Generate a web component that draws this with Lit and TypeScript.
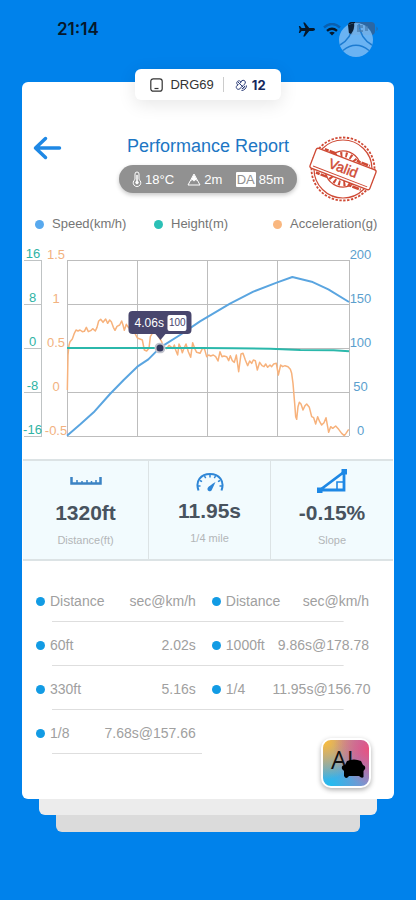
import { LitElement, html, svg, css } from "lit";
import { customElement } from "lit/decorators.js";

type Point = [number, number];

// Series samples on a 846 x 528 plotting canvas.
const speed: Point[] = [
  [0, 527], [40, 493], [80, 457], [129, 402], [170, 360], [211, 320], [244, 298], [279, 263],
  [339, 225], [399, 184], [489, 131], [559, 95], [631, 67], [676, 51], [734, 65], [784, 88], [846, 126],
];
const heightSeries: Point[] = [
  [0, 264], [400, 264], [500, 265], [610, 266], [700, 270], [800, 271], [846, 274],
];
const acceleration: Point[] = [
  [1, 390], [3, 285], [6, 255], [9, 245], [16, 237], [22, 220], [27, 210], [33, 213], [39, 210],
  [46, 215], [52, 214], [58, 202], [64, 215], [71, 212], [77, 206], [85, 213], [90, 202], [95, 183],
  [101, 178], [108, 187], [116, 177], [122, 190], [128, 180], [133, 185], [139, 202], [144, 211],
  [150, 199], [158, 195], [164, 183], [168, 195], [172, 211], [178, 193], [184, 202], [194, 210],
  [204, 220], [211, 234], [219, 237], [226, 240], [232, 270], [239, 273], [246, 265], [250, 230],
  [259, 215], [272, 225], [284, 245], [289, 260], [299, 266], [306, 256], [311, 260], [317, 265],
  [322, 255], [326, 270], [332, 285], [336, 252], [341, 262], [346, 278], [351, 265], [357, 252],
  [364, 275], [371, 292], [377, 248], [383, 265], [389, 277], [399, 280], [406, 266], [412, 265],
  [419, 290], [425, 285], [431, 288], [439, 285], [446, 290], [453, 303], [459, 275], [465, 290],
  [471, 288], [479, 290], [485, 302], [490, 287], [496, 302], [502, 307], [508, 285], [515, 335],
  [522, 282], [528, 280], [535, 300], [542, 317], [548, 303], [554, 310], [559, 300], [565, 302],
  [571, 330], [578, 307], [585, 317], [591, 320], [596, 312], [602, 322], [609, 315], [614, 320],
  [620, 312], [628, 310], [634, 345], [641, 315], [647, 320], [654, 317], [663, 320], [670, 328],
  [674, 340], [678, 370], [683, 430], [686, 470], [689, 478], [693, 440], [697, 427], [702, 432],
  [708, 450], [714, 437], [719, 432], [727, 442], [734, 470], [740, 473], [746, 492], [752, 470],
  [758, 485], [764, 495], [771, 488], [777, 473], [785, 517], [791, 500], [797, 505], [806, 498],
  [815, 508], [824, 520], [832, 527], [837, 520], [845, 508],
];

const line = (pts: Point[]) => "M" + pts.map((p) => p.join(" ")).join("L");

@customElement("run-chart")
export class RunChart extends LitElement {
  static styles = css`
    :host { display: flex; padding: 0 22px 0 2px; font-size: 13px; }
    .axis { display: flex; flex-direction: column; flex: none; }
    .axis span {
      box-sizing: border-box; height: 44px; display: flex; align-items: flex-end;
      justify-content: center; line-height: 12px; white-space: nowrap;
    }
    .axis span:first-child { height: 13px; }
    .height { width: 18px; color: #2fb3a4; }
    .height span { border: solid #bfc3c4; border-width: 0 1px 1px 0; }
    .height span:first-child { border-right-width: 0; }
    .accel { width: 22px; padding-left: 3px; color: #f2b27f; }
    .speed { width: 23px; color: #5c9fce; }
    .plot { position: relative; flex: 1; height: 176px; margin-top: 12px; }
    svg { display: block; width: 100%; height: 100%; overflow: visible; }
    path { fill: none; vector-effect: non-scaling-stroke; stroke-linejoin: round; }
    .grid { stroke: #bdbdbd; stroke-width: 1; }
    .line-accel { stroke: #f7b27c; stroke-width: 1.5; }
    .line-height { stroke: #2bb8ab; stroke-width: 2; }
    .line-speed { stroke: #5aa5e0; stroke-width: 2; }
    .marker {
      position: absolute; left: 33%; top: 50%; width: 7px; height: 7px; border-radius: 50%;
      background: #33375c; border: 2px solid #ffffffb0; transform: translate(-50%, -50%);
    }
    .tip {
      position: absolute; left: 33%; bottom: 102px; transform: translateX(-50%);
      display: flex; align-items: center; gap: 4px; height: 23px; padding: 0 5px 0 6px;
      border-radius: 4px; background: #48466d; color: #fff; font-size: 12px;
    }
    .tip::after {
      content: ""; position: absolute; top: 100%; left: 50%; margin-left: -5px;
      border: 5px solid transparent; border-top: 6px solid #48466d; border-bottom: 0;
    }
    .tip b {
      background: #fff; color: #48466d; font-weight: 400; font-size: 10px; line-height: 16px;
      padding: 0 1px; border-radius: 2px;
    }
  `;

  axis(name: string, labels: string[]) {
    return html`<div class="axis ${name}">${labels.map((l) => html`<span>${l}</span>`)}</div>`;
  }

  render() {
    return html`
      ${this.axis("height", ["16", "8", "0", "-8", "-16"])}
      ${this.axis("accel", ["1.5", "1", "0.5", "0", "-0.5"])}
      <div class="plot">
        <svg viewBox="0 0 846 528" preserveAspectRatio="none" role="img" aria-label="Speed, height and acceleration over time">
          <path class="grid" shape-rendering="crispEdges"
            d="M0 0H846M0 132H846M0 264H846M0 397H846M0 528H846M0 0V528M211 0V528M421 0V528M632 0V528M846 0V528" />
          <path class="line-accel" d=${line(acceleration)} />
          <path class="line-height" d=${line(heightSeries)} />
          <path class="line-speed" d=${line(speed)} />
        </svg>
        <div class="tip">4.06s<b>100</b></div>
        <div class="marker"></div>
      </div>
      ${this.axis("speed", ["200", "150", "100", "50", "0"])}
    `;
  }
}

const airplane = svg`<path d="M17 7.500c0-.9-1.100-1.400-2.300-1.400h-3.500L6.800.6H5.200l2.200 5.500H3.600L2 4H.8l.9 3.500L.8 11H2l1.600-2.100h3.800L5.200 14.400h1.600l4.400-5.500h3.500c1.200 0 2.300-.5 2.300-1.400z"/>`;

const splits = [
  ["60ft", "2.02s", "1000ft", "9.86s@178.78"],
  ["330ft", "5.16s", "1/4", "11.95s@156.70"],
  ["1/8", "7.68s@157.66", "", ""],
];

const rulerIcon = html`<svg class="icon" width="32" height="8" viewBox="0 0 32 8" fill="none" stroke="#3b83c4" stroke-width="2">
  <path stroke-width="2.500" d="M1.500 0V6.500H30.500V0" /><path stroke-width="1.500" d="M7 3V6M12 4V6M17 3V6M21.500 4V6M26 3V6" /></svg>`;

const gaugeIcon = html`<svg class="icon" width="28" height="20" viewBox="0 0 28 20" fill="none" stroke="#2f86d6">
  <path stroke-width="2" d="M2.500 18.500C-1 9 5 2 14 2S29 9 25.500 18.500" />
  <path stroke-width="1.500" d="M14 3V5.500M8.500 4L9.700 6.200M19.500 4L18.300 6.200M4 8.500L6 9.700M24 8.500L22 9.700M2 14H4.500M26 14H23.500" />
  <path fill="#2f86d6" stroke="none" d="M12 15.500Q13 14 19.500 10Q17 15.500 16 17.500A2.300 2.300 0 1 1 12 15.500Z" /></svg>`;

const slopeIcon = html`<svg class="icon" width="30" height="24" viewBox="0 0 30 24" fill="none" stroke="#1e88e5">
  <path stroke-width="2.800" d="M3 21L27 3V21Z" /><path stroke-width="1.600" d="M20 20V13H26" />
  <path fill="#1e88e5" stroke="none" d="M0 18.500H5.500V24H0ZM24.500 0H30V5.500H24.500Z" /></svg>`;

@customElement("app-root")
export class AppRoot extends LitElement {
  static styles = css`
    :host {
      display: block; box-sizing: border-box; min-height: 100vh; padding: 0 22px 68px;
      background: #0082eb; font-family: "Liberation Sans", Arial, sans-serif;
    }
    svg { display: block; flex: none; }
    .status {
      display: flex; align-items: center; height: 58px; padding: 0 15px 0 35px; color: #06182b;
      position: relative;
    }
    .time { flex: 1; font: 600 17px/20px Inter, sans-serif; }
    .signals { display: flex; align-items: center; gap: 7px; }
    .ball { position: absolute; right: 21px; top: 23px; }
    .tab {
      position: relative; z-index: 1; display: flex; align-items: center; width: max-content; height: 31px;
      margin: 11px auto -18px; padding: 0 15px; border-radius: 6px; background: #fff; color: #333;
      font-size: 13px; box-shadow: 0 4px 18px #0000001a;
    }
    .tab svg { margin-right: 7px; }
    .tab .knot { margin-right: 5px; }
    .tab i { width: 1px; height: 15px; margin: 0 11px 0 9px; background: #ccc; }
    .tab b { color: #14285c; font: 700 13px Inter, sans-serif; }
    .card { position: relative; padding: 50px 0 45px; background: #fff; border-radius: 6px; }
    .sheet { height: 16px; margin: 0 17px; background: #ececec; border-radius: 0 0 6px 6px; }
    .sheet.back { height: 17px; margin: 0 34px; background: #dbdbdb; }
    .head { display: grid; grid-template-columns: 1fr auto 1fr; height: 72px; padding: 0 16px 0 11px; }
    .side { display: flex; align-items: flex-start; }
    .side.end { justify-content: flex-end; padding-top: 2px; }
    button { border: 0; padding: 0; background: none; font: inherit; cursor: pointer; }
    .back-btn { padding-top: 4px; }
    .mid { display: flex; flex-direction: column; align-items: center; width: 178px; margin-left: -5px; margin-right: -10px; }
    h1 { margin: 0 0 5px; font-size: 18px; font-weight: 400; line-height: 28px; color: #1d76c4; white-space: nowrap; }
    .pill {
      box-sizing: border-box; display: flex; align-items: center; justify-content: space-between;
      width: 178px; height: 28px; padding: 0 13px; border-radius: 14px; background: #919191;
      color: #fff; font-size: 13px; box-shadow: 0 2px 4px #00000038;
    }
    .pill span { display: flex; align-items: center; gap: 3px; }
    .pill b { background: #fff; color: #919191; font-weight: 400; line-height: 15px; padding: 0 1px; border-radius: 1px; }
    .legend {
      display: grid; grid-template-columns: repeat(3, 1fr); margin: 10px 2px 14px 13px; padding: 0;
      list-style: none; color: #757575; font-size: 13px; line-height: 20px;
    }
    .legend li { display: flex; align-items: center; gap: 8px; white-space: nowrap; }
    .dot { width: 9px; height: 9px; border-radius: 50%; background: #129be4; flex: none; }
    .dot.speed { background: #58a9ee; }
    .dot.height { background: #2bc0b6; }
    .dot.accel { background: #f9b77f; }
    .stats {
      display: grid; grid-template-columns: 125fr 122fr 123fr; margin: 22px 1px 17px;
      border: solid #dce3e5; border-width: 2px 0; background: #f2fbfe;
    }
    .stat { display: flex; flex-direction: column; align-items: center; height: 98px; }
    .stat + .stat { border-left: 1px solid #dce3e5; }
    .icon-box { display: flex; align-items: center; height: 40px; }
    .stat strong { font-size: 21px; line-height: 24px; color: #48535e; }
    .stat small { margin-top: 8px; font-size: 11px; line-height: 14px; color: #b3b6b8; }
    .stat.tall .icon-box { height: 38px; padding-top: 4px; box-sizing: border-box; }
    table { width: calc(100% - 39px); margin-left: 14px; table-layout: fixed; border-collapse: collapse; font-size: 14px; color: #a0a0a0; }
    tr { height: 44px; background: linear-gradient(#dedede, #dedede) 16px 100% / calc(100% - 41px) 1px no-repeat; }
    tr:last-child { background-size: 45% 1px; }
    th, td { padding: 2px 0 0; font-weight: 400; text-align: left; white-space: nowrap; }
    .second { padding-left: 16px; }
    .num { text-align: right; }
    .name { display: flex; align-items: center; gap: 5px; }
    .ai {
      position: absolute; right: 23px; bottom: 11px; box-sizing: border-box; width: 50px; height: 50px;
      border: 2px solid #fff; border-radius: 10px; box-shadow: 0 2px 5px #00000050; overflow: hidden;
      background:
        radial-gradient(circle at 100% 20%, #e9527f, #e9527f00 60%),
        radial-gradient(circle at 5% 5%, #f7bd3e, #f7bd3e00 60%),
        radial-gradient(circle at 15% 100%, #21bdf0, #21bdf000 75%), #9a86c4;
    }
  `;

  name(text: string) {
    return text ? html`<span class="name"><span class="dot"></span>${text}</span>` : "";
  }

  stat(icon: unknown, value: string, label: string, tall = false) {
    return html`<div class="stat ${tall ? "tall" : ""}">
      <div class="icon-box">${icon}</div><strong>${value}</strong><small>${label}</small>
    </div>`;
  }

  stamp() {
    return html`<svg width="70" height="70" viewBox="-35 -35 70 70" fill="none" stroke="#cf4a35" role="img" aria-label="Valid">
      <circle r="31.500" stroke-width="1.800" stroke-dasharray="2.400 1.500" />
      <circle r="29" stroke-width="1.200" />
      <g transform="rotate(21)">
        <circle r="18" stroke-width="1.300" />
        <circle r="14.500" stroke-width="5" stroke-dasharray="2 3" />
        <path stroke-width="2.500" stroke-dasharray="4 1 7 1" d="M-24-12H-12M10-12.500H24M-24 13H-12M10 13H24" />
        <rect x="-32" y="-10.500" width="64" height="21" rx="2" fill="#fff" stroke-width="1.300" />
        <path stroke-width="1" d="M-29 8H29" />
        <text y="4" text-anchor="middle" font-size="14" fill="#cf4a35" stroke-width=".4">Valid</text>
      </g>
    </svg>`;
  }

  render() {
    return html`
      <div class="status">
        <span class="time">21:14</span>
        <div class="signals">
          <svg width="18" height="15" viewBox="0 0 18 15" fill="#06182b">${airplane}</svg>
          <svg width="18" height="13" viewBox="0 0 18 13" fill="none" stroke-width="2.400">
            <path stroke="#0a5fae" d="M1 4.500Q9-2.500 17 4.500" />
            <path stroke="#06182b" d="M4 7.800Q9 3.500 14 7.800" />
            <path fill="#06182b" d="M9 12.500L6.200 9.800Q9 7.800 11.800 9.800Z" />
          </svg>
          <svg width="31" height="14" viewBox="0 0 31 14">
            <rect width="27" height="13" rx="4" fill="#2b67a3" />
            <path d="M28.500 4.500V9Q31 6.800 28.500 4.500Z" fill="#2b67a3" />
            <path d="M7 0H4Q0 0 0 4V9Q0 12 4 13Q7 8 7 0Z" fill="#091624" />
          </svg>
        </div>
        <svg class="ball" width="34" height="34" viewBox="0 0 34 34" fill="none">
          <circle cx="17" cy="17" r="17" fill="#7dbcf5" fill-opacity=".85" />
          <g stroke="#1c7bd1" stroke-width="1.500">
            <path d="M14 1Q13 15 1 22M20 1Q21 15 33 22M4 27.500Q17 17 30 27.500" />
          </g>
          <g fill="#477caf" fill-opacity=".7"><path d="M18 2H24V5H20V7H24V9H18ZM26 3H29V8H26Z" /></g>
          <path d="M9 2L15 0Q16 6 12 11L10 10Z" fill="#0b2038" />
        </svg>
      </div>

      <div class="tab">
        <svg width="13" height="14" viewBox="0 0 13 14" fill="none" stroke="#333" stroke-width="1.200">
          <rect x=".8" y=".8" width="11.400" height="12.400" rx="2.500" /><path d="M4.500 10.500H8.500" />
        </svg>
        <span>DRG69</span><i></i>
        <svg class="knot" width="12" height="12" viewBox="0 0 12 12" fill="none" stroke="#2b3c78" stroke-width="1">
          <path d="M6 3.200A2.200 2.200 0 1 0 3 6A2.200 2.200 0 1 0 5.500 9L9 5.500A2.200 2.200 0 1 0 6 3.200L3.500 5.500M3 3L9 9" />
          <path d="M6.500 11.500A5 5 0 0 0 11.500 6.500M6.800 9.800A3.500 3.500 0 0 0 9.800 6.800" />
        </svg>
        <b>12</b>
      </div>

      <main class="card">
        <header class="head">
          <div class="side">
            <button class="back-btn" aria-label="Back">
              <svg width="29" height="24" viewBox="0 0 29 24" fill="none" stroke="#1e88e5" stroke-width="3.500" stroke-linecap="round" stroke-linejoin="round">
                <path d="M12.500 2.500L2.500 12L12.500 21.500M3.500 12H26.500" />
              </svg>
            </button>
          </div>
          <div class="mid">
            <h1>Performance Report</h1>
            <div class="pill">
              <span>
                <svg width="10" height="16" viewBox="0 0 10 16" fill="none" stroke="#fff">
                  <path d="M3 8.500V3A2 2 0 0 1 7 3V8.500A3.800 3.800 0 1 1 3 8.500Z" />
                  <path stroke-width="1.500" d="M5 4V11" /><circle cx="5" cy="11.500" r="1.300" fill="#fff" />
                </svg>18°C</span>
              <span>
                <svg width="14" height="13" viewBox="0 0 14 13" fill="none" stroke="#fff">
                  <path d="M1 12L4 6.500L7 1L10 6.500L13 12Z" /><path fill="#fff" stroke="none" d="M4.500 6L7 1.500L9.500 6L10 8L8.500 7L7 8.500L5.500 7L4 8Z" />
                </svg>2m</span>
              <span><b>DA</b>85m</span>
            </div>
          </div>
          <div class="side end">${this.stamp()}</div>
        </header>

        <ul class="legend">
          <li><span class="dot speed"></span>Speed(km/h)</li>
          <li><span class="dot height"></span>Height(m)</li>
          <li><span class="dot accel"></span>Acceleration(g)</li>
        </ul>

        <run-chart></run-chart>

        <section class="stats">
          ${this.stat(rulerIcon, "1320ft", "Distance(ft)")}
          ${this.stat(gaugeIcon, "11.95s", "1/4 mile", true)}
          ${this.stat(slopeIcon, "-0.15%", "Slope")}
        </section>

        <table>
          <colgroup><col style="width:19%" /><col style="width:29%" /><col style="width:23%" /><col style="width:29%" /></colgroup>
          <tr>
            <th scope="col">${this.name("Distance")}</th><th scope="col" class="num">sec@km/h</th>
            <th scope="col" class="second">${this.name("Distance")}</th><th scope="col" class="num">sec@km/h</th>
          </tr>
          ${splits.map(
            ([a, b, c, d]) => html`<tr>
              <td>${this.name(a)}</td><td class="num">${b}</td>
              <td class="second">${this.name(c)}</td><td class="num">${d}</td>
            </tr>`,
          )}
        </table>

        <button class="ai" aria-label="AI car assistant">
          <svg width="46" height="46" viewBox="0 0 46 46">
            <text x="8" y="29" font-size="25" font-family="Open Sans, sans-serif" fill="#111">AI</text>
            <path d="M24 21Q31 18 38 21L40 25Q43 26 42 29L40.500 31V37Q39 39 36 36H26Q23 40 21 36V31L19 29Q18 25 22 25Z" />
          </svg>
        </button>
      </main>
      <div class="sheet"></div>
      <div class="sheet back"></div>
    `;
  }
}
